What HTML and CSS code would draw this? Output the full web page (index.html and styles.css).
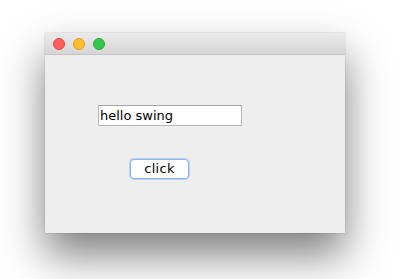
FILE: index.html
```html
<!DOCTYPE html>
<html>
<head>
<meta charset="utf-8">
<link rel="stylesheet" href="styles.css">
</head>
<body>
<div class="window">
  <div class="titlebar">
    <span class="light red"></span>
    <span class="light yellow"></span>
    <span class="light green"></span>
  </div>
  <div class="content">
    <div class="field">hello swing</div>
    <div class="button">click</div>
  </div>
</div>
</body>
</html>
```
FILE: styles.css
```css
html, body {
  margin: 0;
  background: #ffffff;
}
body {
  min-height: 279px;
  box-sizing: border-box;
  padding: 33px 0 0 45px;
  font-family: "DejaVu Sans", "Liberation Sans", sans-serif;
}
.window {
  width: 300px;
  height: 200px;
  background: #eeeeee;
  display: flex;
  flex-direction: column;
  box-shadow: 0 22px 40px rgba(0, 0, 0, 0.5), 0 0 1px rgba(0, 0, 0, 0.35);
}
.titlebar {
  height: 22px;
  flex: none;
  box-sizing: border-box;
  background: linear-gradient(#ebebeb, #d6d6d6);
  border-bottom: 1px solid #c4c4c4;
  display: flex;
  align-items: center;
  padding-left: 8px;
  gap: 8px;
}
.light {
  width: 12px;
  height: 12px;
  border-radius: 50%;
  box-sizing: border-box;
}
.red { background: #fc5f57; border: 1px solid #e2463f; }
.yellow { background: #fdbc2e; border: 1px solid #e1a116; }
.green { background: #34c84a; border: 1px solid #2aac32; }
.content {
  flex: 1;
  padding: 50px 0 0 53px;
  display: flex;
  flex-direction: column;
  align-items: flex-start;
}
.field {
  width: 144px;
  height: 21px;
  box-sizing: border-box;
  background: #ffffff;
  border: 1px solid #b9b9b9;
  border-top-color: #a5a5a5;
  font-size: 13px;
  line-height: 19px;
  padding-left: 1px;
  color: #000;
}
.button {
  margin: 33px 0 0 32px;
  width: 59px;
  height: 20px;
  box-sizing: border-box;
  border-radius: 4px;
  background: #ffffff;
  border: 1px solid #8fb4e6;
  box-shadow: 0 0 0 1px #b8d2f2;
  font-size: 13px;
  line-height: 18px;
  text-align: center;
  letter-spacing: 0.3px;
  color: #000;
}
```
